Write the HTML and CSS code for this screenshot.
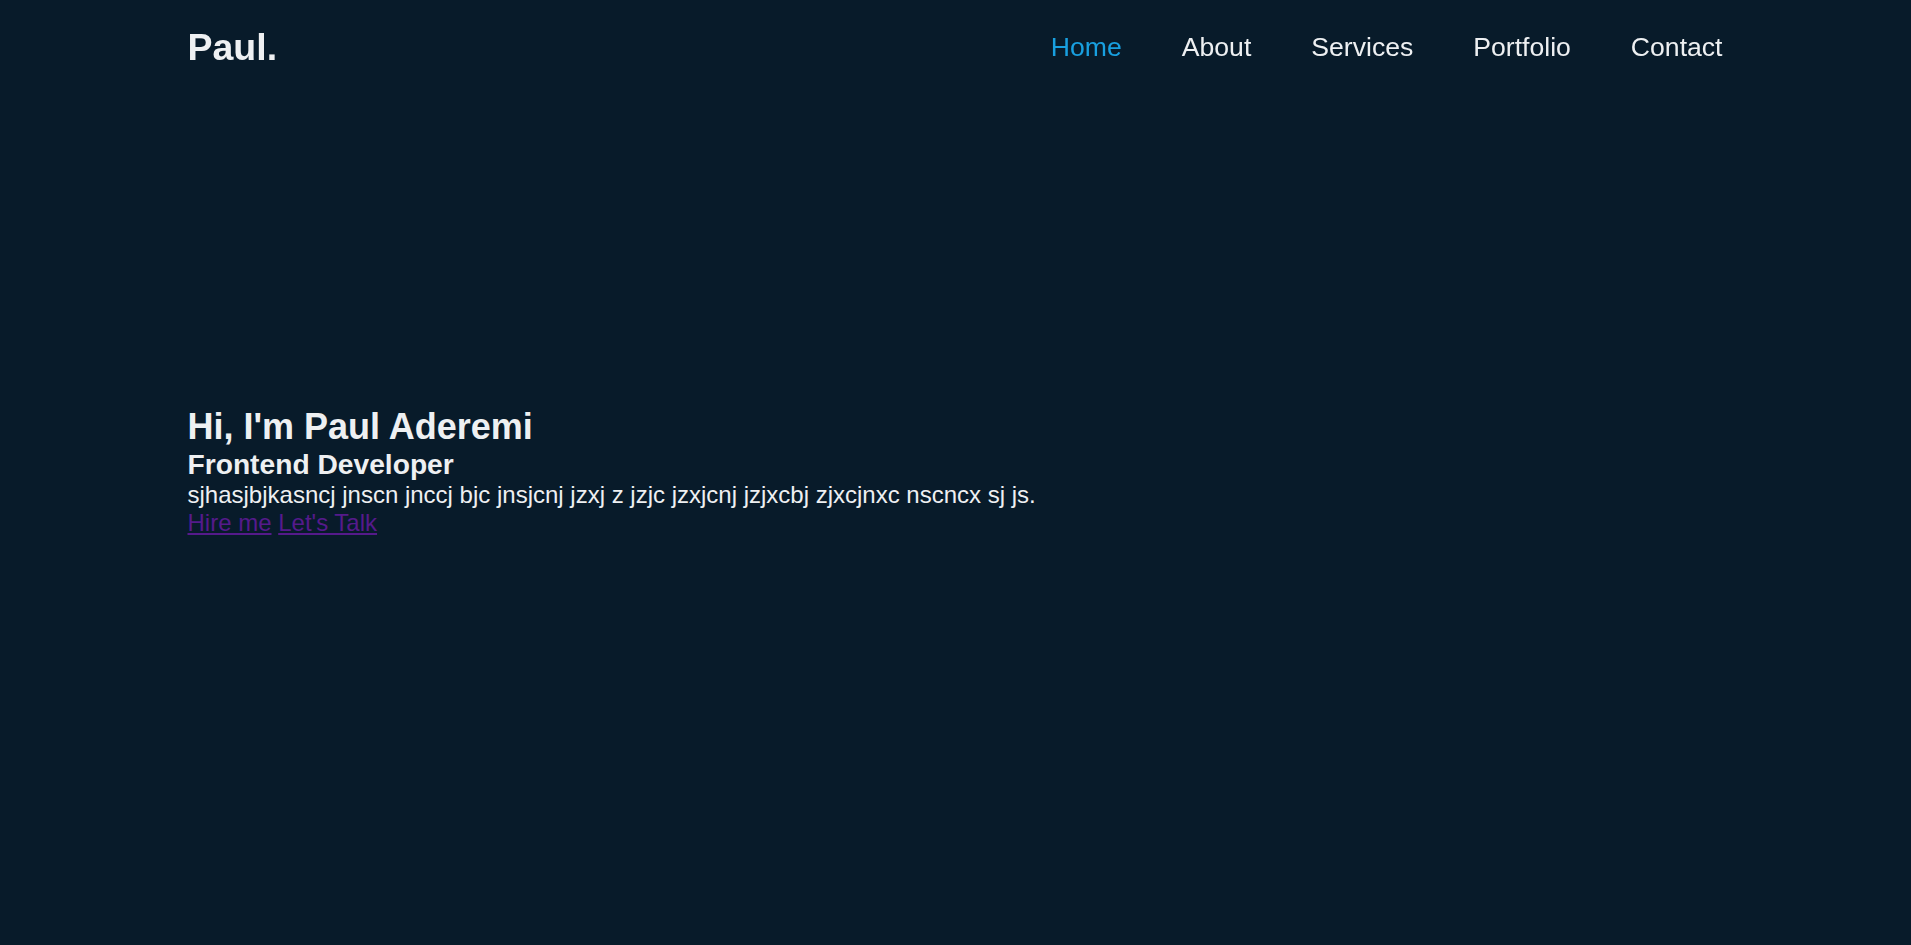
FILE: index.html
```html
<!DOCTYPE html>
<html lang="en">
<head>
<meta charset="UTF-8">
<title>Paul Aderemi</title>
<link rel="stylesheet" href="styles.css">
</head>
<body>
<header class="header">
  <div class="container header-inner">
    <a href="#" class="logo">Paul.</a>
    <nav class="nav">
      <a href="#" class="nav-link active">Home</a>
      <a href="#" class="nav-link">About</a>
      <a href="#" class="nav-link">Services</a>
      <a href="#" class="nav-link">Portfolio</a>
      <a href="#" class="nav-link">Contact</a>
    </nav>
  </div>
</header>
<main class="hero">
  <div class="container hero-content">
    <h1 class="hero-title">Hi, I'm Paul Aderemi</h1>
    <h2 class="hero-role">Frontend Developer</h2>
    <p class="hero-text">sjhasjbjkasncj jnscn jnccj bjc jnsjcnj jzxj z jzjc jzxjcnj jzjxcbj zjxcjnxc nscncx sj js.</p>
    <div class="hero-links"><a href="#" class="hero-link">Hire me</a> <a href="#" class="hero-link">Let's Talk</a></div>
  </div>
</main>
</body>
</html>
```
FILE: styles.css
```css
* {
  margin: 0;
  padding: 0;
  box-sizing: border-box;
}

html, body {
  background: #081b2a;
  color: #eef0f2;
  font-family: "Liberation Sans", Arial, sans-serif;
}

.container {
  width: 1536px;
  margin: 0 auto;
}

.header {
  position: fixed;
  top: 0;
  left: 0;
  right: 0;
  padding-top: 26px;
}

.header-inner {
  display: flex;
  align-items: center;
  justify-content: space-between;
}

.logo {
  font-size: 37.5px;
  font-weight: 700;
  color: #eef0f2;
  text-decoration: none;
}

.nav {
  display: flex;
  gap: 60px;
  padding-right: 1px;
}

.nav-link {
  font-size: 26.6px;
  color: #eef0f2;
  text-decoration: none;
}

.nav-link.active {
  color: #18a0e0;
}

.hero {
  min-height: 100vh;
  display: flex;
  align-items: center;
  padding-bottom: 2px;
}

.hero-title {
  font-size: 36px;
  font-weight: 700;
}

.hero-role {
  font-size: 28.2px;
  font-weight: 700;
}

.hero-text {
  font-size: 24px;
}

.hero-links {
  font-size: 24px;
}

.hero-link {
  color: #551a8b;
}
```
